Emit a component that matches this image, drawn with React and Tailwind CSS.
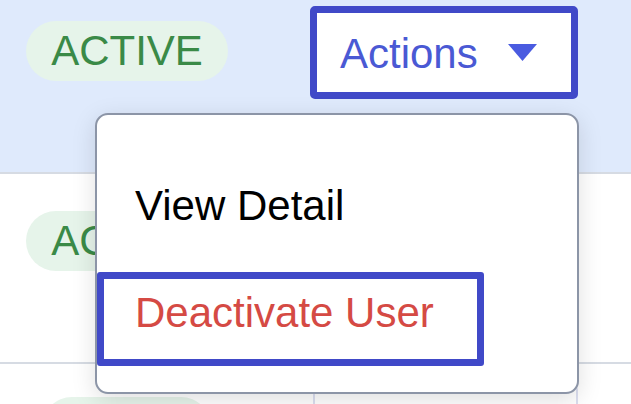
import React from "react";

function Badge({ className = "", children }) {
  return (
    <div
      className={
        "flex h-[60px] w-[202px] items-center justify-center rounded-full bg-[#e6f4ea] text-[42px] leading-none text-[#3a8a47] " +
        className
      }
    >
      {children}
    </div>
  );
}

export default function App() {
  return (
    <div
      className="relative h-[404px] w-[631px] overflow-hidden bg-white"
      style={{ fontFamily: '"Liberation Sans", Arial, sans-serif' }}
    >
      {/* Row 1 (selected) */}
      <div className="flex h-[174px] items-start border-b-2 border-[#d6dbe3] bg-[#dfeafc] pl-[26px]">
        <Badge className="mt-[21px]">ACTIVE</Badge>
        <button className="ml-[82px] mt-[6px] flex h-[93px] w-[268px] items-center rounded-[5px] border-[7px] border-[#4049c8] bg-white pl-[23px] pt-[3px] text-[42px] leading-none text-[#4a59d4]">
          <span>Actions</span>
          <svg
            className="ml-[30px] mt-[-3px]"
            width="29"
            height="17"
            viewBox="0 0 29 17"
          >
            <polygon points="0,0 29,0 14.5,17" fill="#4a5be0" />
          </svg>
        </button>
      </div>

      {/* Row 2 */}
      <div className="flex h-[190px] items-start border-b-2 border-[#d6dbe3] bg-white pl-[26px]">
        <Badge className="mt-[37px]">ACTIVE</Badge>
        <button className="ml-[82px] mt-[16px] flex h-[93px] w-[268px] items-center rounded-[5px] border-2 border-[#d6d9ec] bg-white pl-[23px] text-[42px] leading-none text-[#4a59d4]">
          Actions
        </button>
      </div>

      {/* Row 3 */}
      <div className="flex h-[60px] items-start bg-white pl-[42px]">
        <div className="mt-[33px] h-[60px] w-[169px] rounded-full bg-[#e6f4ea]" />
        <div className="ml-[102px] mt-[16px] h-[93px] w-[265px] rounded-[10px] border-2 border-[#dcdff0] bg-white" />
      </div>

      {/* Dropdown menu */}
      <div className="absolute left-[95px] top-[113px] h-[281px] w-[484px] rounded-[13px] border-2 border-[#8c95a7] bg-white shadow-[0_6px_24px_rgba(0,0,0,0.13)]">
        <div className="pl-[38px] pt-[67px] text-[42px] leading-[47px] text-black">
          View Detail
        </div>
        <div className="ml-[0px] mt-[43px] h-[94px] w-[387px] rounded-[3px] border-[7px] border-[#4049c8] pl-[31px] pt-[10px] text-[42px] leading-[47px] text-[#d54a44]">
          Deactivate User
        </div>
      </div>
    </div>
  );
}
